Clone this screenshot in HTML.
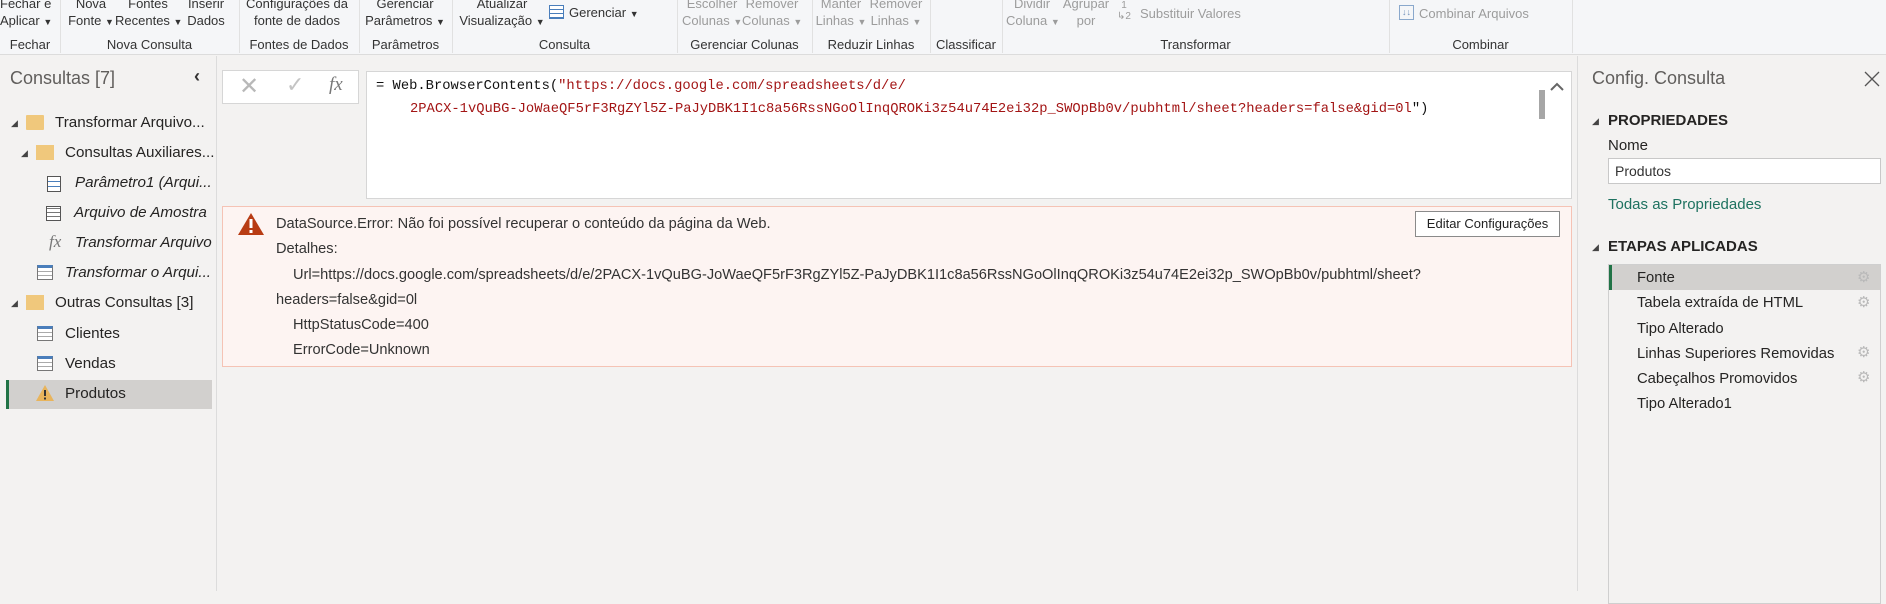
<!DOCTYPE html>
<html><head><meta charset="utf-8"><style>
*{margin:0;padding:0;box-sizing:border-box}
body{width:1886px;height:591px;overflow:hidden;background:#f3f2f1;font-family:"Liberation Sans",sans-serif;color:#252423;position:relative}
.a{position:absolute;white-space:nowrap}
.rb{font-size:13px;color:#333;line-height:17px;text-align:center}
.dis{color:#9c9c9c}
.gl{font-size:13px;color:#333;top:37px;text-align:center}
.sep{position:absolute;top:0;width:1px;height:53px;background:#e1e1e1}
.tri{font-size:9px}
.it{font-size:15.2px;color:#252423}
.code{font-family:"Liberation Mono",monospace;font-size:13.8px}
.et{font-size:14.6px;color:#333}
.st{font-size:14.8px;left:1637px}
.gear{left:1857px;color:#b9b9b9;font-size:15px}
</style></head><body>
<div class="a" style="left:0;top:0;width:1886px;height:55px;background:#f5f6f8;border-bottom:1px solid #dcdcdc"></div>
<div class="a rb" style="left:0;top:-5px;width:48px">Fechar e<br>Aplicar <span class="tri">▼</span></div>
<div class="a rb" style="left:66px;top:-5px;width:50px">Nova<br>Fonte <span class="tri">▼</span></div>
<div class="a rb" style="left:115px;top:-5px;width:66px">Fontes<br>Recentes <span class="tri">▼</span></div>
<div class="a rb" style="left:183px;top:-5px;width:46px">Inserir<br>Dados</div>
<div class="a rb" style="left:242px;top:-5px;width:110px">Configurações da<br>fonte de dados</div>
<div class="a rb" style="left:364px;top:-5px;width:82px">Gerenciar<br>Parâmetros <span class="tri">▼</span></div>
<div class="a rb" style="left:458px;top:-5px;width:88px">Atualizar<br>Visualização <span class="tri">▼</span></div>
<div class="a" style="left:549px;top:5px;width:15px;height:14px;border:1px solid #4a7ebb;background:repeating-linear-gradient(0deg,#4a7ebb 0 1px,#fff 1px 4px)"></div>
<div class="a rb" style="left:569px;top:4px">Gerenciar <span class="tri">▼</span></div>
<div class="a rb dis" style="left:682px;top:-5px;width:60px">Escolher<br>Colunas <span class="tri">▼</span></div>
<div class="a rb dis" style="left:742px;top:-5px;width:60px">Remover<br>Colunas <span class="tri">▼</span></div>
<div class="a rb dis" style="left:815px;top:-5px;width:52px">Manter<br>Linhas <span class="tri">▼</span></div>
<div class="a rb dis" style="left:868px;top:-5px;width:56px">Remover<br>Linhas <span class="tri">▼</span></div>
<div class="a rb dis" style="left:1006px;top:-5px;width:52px">Dividir<br>Coluna <span class="tri">▼</span></div>
<div class="a rb dis" style="left:1060px;top:-5px;width:52px">Agrupar<br>por</div>
<div class="a rb dis" style="left:1117px;top:0px;font-size:10px;line-height:11px">1<br>↳2</div>
<div class="a rb dis" style="left:1140px;top:5px">Substituir Valores</div>
<div class="a" style="left:1399px;top:5px;width:15px;height:15px;border:1px solid #8aa8cc;color:#6f8fb8;font-size:9px;line-height:12px;text-align:center">↓↓</div>
<div class="a rb dis" style="left:1419px;top:5px">Combinar Arquivos</div>
<div class="sep" style="left:60px"></div><div class="sep" style="left:239px"></div><div class="sep" style="left:359px"></div><div class="sep" style="left:452px"></div><div class="sep" style="left:677px"></div><div class="sep" style="left:812px"></div><div class="sep" style="left:930px"></div><div class="sep" style="left:1002px"></div><div class="sep" style="left:1389px"></div><div class="sep" style="left:1572px"></div>
<div class="a gl" style="left:0;width:60px">Fechar</div>
<div class="a gl" style="left:60px;width:179px">Nova Consulta</div>
<div class="a gl" style="left:239px;width:120px">Fontes de Dados</div>
<div class="a gl" style="left:359px;width:93px">Parâmetros</div>
<div class="a gl" style="left:452px;width:225px">Consulta</div>
<div class="a gl" style="left:677px;width:135px">Gerenciar Colunas</div>
<div class="a gl" style="left:812px;width:118px">Reduzir Linhas</div>
<div class="a gl" style="left:930px;width:72px">Classificar</div>
<div class="a gl" style="left:1002px;width:387px">Transformar</div>
<div class="a gl" style="left:1389px;width:183px">Combinar</div>

<div class="a" style="left:216px;top:56px;width:1px;height:535px;background:#dcdcdc"></div>
<div class="a" style="left:10px;top:68px;font-size:18px;color:#605e5c">Consultas [7]</div>
<div class="a" style="left:194px;top:66px;font-size:18px;color:#333;font-weight:bold">‹</div>
<div class="a" style="left:6px;top:380px;width:206px;height:29px;background:#d2d0ce"></div>
<div class="a" style="left:6px;top:380px;width:3px;height:29px;background:#217346"></div>
<div class="a tri" style="left:11px;top:118px;color:#444">◢</div>
<div class="a" style="left:26px;top:115px;width:18px;height:15px;background:#f0c87c;border-radius:1px"></div>
<div class="a it" style="left:55px;top:114px">Transformar Arquivo...</div>
<div class="a tri" style="left:21px;top:148px;color:#444">◢</div>
<div class="a" style="left:36px;top:145px;width:18px;height:15px;background:#f0c87c"></div>
<div class="a it" style="left:65px;top:144px">Consultas Auxiliares...</div>
<div class="a" style="left:47px;top:176px;width:14px;height:16px;border:1px solid #555;background:repeating-linear-gradient(0deg,#fff 0 4px,#4a7ebb 4px 5px)"></div>
<div class="a it" style="left:75px;top:174px;font-style:italic">Parâmetro1 (Arqui...</div>
<div class="a" style="left:46px;top:206px;width:15px;height:15px;border:1px solid #555;background:repeating-linear-gradient(0deg,#fff 0 3px,#777 3px 4px)"></div>
<div class="a it" style="left:74px;top:204px;font-style:italic">Arquivo de Amostra</div>
<div class="a" style="left:49px;top:232px;font-family:'Liberation Serif',serif;font-style:italic;font-size:17px;color:#777">fx</div>
<div class="a it" style="left:75px;top:234px;font-style:italic">Transformar Arquivo</div>
<div class="a" style="left:37px;top:265px;width:16px;height:15px;border:1px solid #777;background:repeating-linear-gradient(0deg,#fff 0 3px,#aaa 3px 4px);border-top:3px solid #4a7ebb"></div>
<div class="a it" style="left:65px;top:264px;font-style:italic">Transformar o Arqui...</div>
<div class="a tri" style="left:11px;top:298px;color:#444">◢</div>
<div class="a" style="left:26px;top:295px;width:18px;height:15px;background:#f0c87c"></div>
<div class="a it" style="left:55px;top:294px">Outras Consultas [3]</div>
<div class="a" style="left:37px;top:326px;width:16px;height:15px;border:1px solid #777;background:repeating-linear-gradient(0deg,#fff 0 3px,#aaa 3px 4px);border-top:3px solid #4a7ebb"></div>
<div class="a it" style="left:65px;top:325px">Clientes</div>
<div class="a" style="left:37px;top:356px;width:16px;height:15px;border:1px solid #777;background:repeating-linear-gradient(0deg,#fff 0 3px,#aaa 3px 4px);border-top:3px solid #4a7ebb"></div>
<div class="a it" style="left:65px;top:355px">Vendas</div>
<svg class="a" style="left:35px;top:384px" width="20" height="18"><path d="M10 1 L19 17 L1 17 Z" fill="#e8b45c"/><rect x="9" y="6" width="2" height="6" fill="#333"/><rect x="9" y="13.5" width="2" height="2" fill="#333"/></svg>
<div class="a it" style="left:65px;top:385px">Produtos</div>

<div class="a" style="left:222px;top:70px;width:137px;height:34px;background:#fff;border:1px solid #d6d6d6"></div>
<div class="a" style="left:239px;top:72px;font-size:24px;color:#b8b8b8">✕</div>
<div class="a" style="left:286px;top:72px;font-size:22px;color:#c4c4c4">✓</div>
<div class="a" style="left:329px;top:74px;font-family:'Liberation Serif',serif;font-style:italic;font-size:19px;color:#777">fx</div>
<div class="a" style="left:366px;top:71px;width:1206px;height:128px;background:#fff;border:1px solid #d6d6d6"></div>
<div class="a code" style="left:376px;top:79px"><span style="color:#111">= Web.BrowserContents(</span><span style="color:#a31515">"https://docs.google.com/spreadsheets/d/e/</span></div>
<div class="a code" style="left:410px;top:102px;color:#a31515">2PACX-1vQuBG-JoWaeQF5rF3RgZYl5Z-PaJyDBK1I1c8a56RssNGoOlInqQROKi3z54u74E2ei32p_SWOpBb0v/pubhtml/sheet?headers=false&amp;gid=0l<span style="color:#111">")</span></div>
<div class="a" style="left:1539px;top:90px;width:6px;height:29px;background:#a6a6a6"></div>
<svg class="a" style="left:1550px;top:82px" width="14" height="10"><path d="M1 8 L7 2 L13 8" fill="none" stroke="#666" stroke-width="2"/></svg>

<div class="a" style="left:222px;top:206px;width:1350px;height:161px;background:#fdf4f2;border:1px solid #f5c3b5"></div>
<svg class="a" style="left:237px;top:212px" width="28" height="24"><path d="M14 1 L27 23 L1 23 Z" fill="#b83c14"/><rect x="12.5" y="7" width="3" height="9" fill="#fff"/><rect x="12.5" y="18" width="3" height="3" fill="#fff"/></svg>
<div class="a et" style="left:276px;top:216px">DataSource.Error: Não foi possível recuperar o conteúdo da página da Web.</div>
<div class="a et" style="left:276px;top:241px">Detalhes:</div>
<div class="a et" style="left:293px;top:267px">Url=https://docs.google.com/spreadsheets/d/e/2PACX-1vQuBG-JoWaeQF5rF3RgZYl5Z-PaJyDBK1I1c8a56RssNGoOlInqQROKi3z54u74E2ei32p_SWOpBb0v/pubhtml/sheet?</div>
<div class="a et" style="left:276px;top:292px">headers=false&amp;gid=0l</div>
<div class="a et" style="left:293px;top:317px">HttpStatusCode=400</div>
<div class="a et" style="left:293px;top:342px">ErrorCode=Unknown</div>
<div class="a" style="left:1415px;top:211px;width:145px;height:26px;background:#fff;border:1px solid #8a8a8a;font-size:13px;line-height:24px;text-align:center;color:#222">Editar Configurações</div>

<div class="a" style="left:1577px;top:56px;width:1px;height:535px;background:#dcdcdc"></div>
<div class="a" style="left:1592px;top:68px;font-size:18px;color:#605e5c">Config. Consulta</div>
<svg class="a" style="left:1864px;top:71px" width="16" height="16"><path d="M1 1 L15 15 M15 1 L1 15" stroke="#555" stroke-width="1.3"/></svg>
<div class="a tri" style="left:1592px;top:116px;color:#444">◢</div>
<div class="a" style="left:1608px;top:112px;font-size:15px;font-weight:bold;color:#252423">PROPRIEDADES</div>
<div class="a" style="left:1608px;top:137px;font-size:15px">Nome</div>
<div class="a" style="left:1608px;top:158px;width:273px;height:26px;background:#fff;border:1px solid #c8c8c8;font-size:14px;line-height:24px;padding-left:6px;color:#333">Produtos</div>
<div class="a" style="left:1608px;top:196px;font-size:15px;color:#1e7260">Todas as Propriedades</div>
<div class="a tri" style="left:1592px;top:242px;color:#444">◢</div>
<div class="a" style="left:1608px;top:238px;font-size:15px;font-weight:bold;color:#252423">ETAPAS APLICADAS</div>
<div class="a" style="left:1608px;top:264px;width:273px;height:340px;border:1px solid #cfcfcf"></div>
<div class="a" style="left:1609px;top:265px;width:271px;height:25px;background:#d2d0ce"></div>
<div class="a" style="left:1609px;top:265px;width:3px;height:25px;background:#217346"></div>
<div class="a st" style="top:270px">Fonte</div><div class="a gear" style="top:268px">⚙</div>
<div class="a st" style="top:295px">Tabela extraída de HTML</div><div class="a gear" style="top:293px">⚙</div>
<div class="a st" style="top:321px">Tipo Alterado</div>
<div class="a st" style="top:346px">Linhas Superiores Removidas</div><div class="a gear" style="top:343px">⚙</div>
<div class="a st" style="top:371px">Cabeçalhos Promovidos</div><div class="a gear" style="top:368px">⚙</div>
<div class="a st" style="top:396px">Tipo Alterado1</div>
</body></html>
